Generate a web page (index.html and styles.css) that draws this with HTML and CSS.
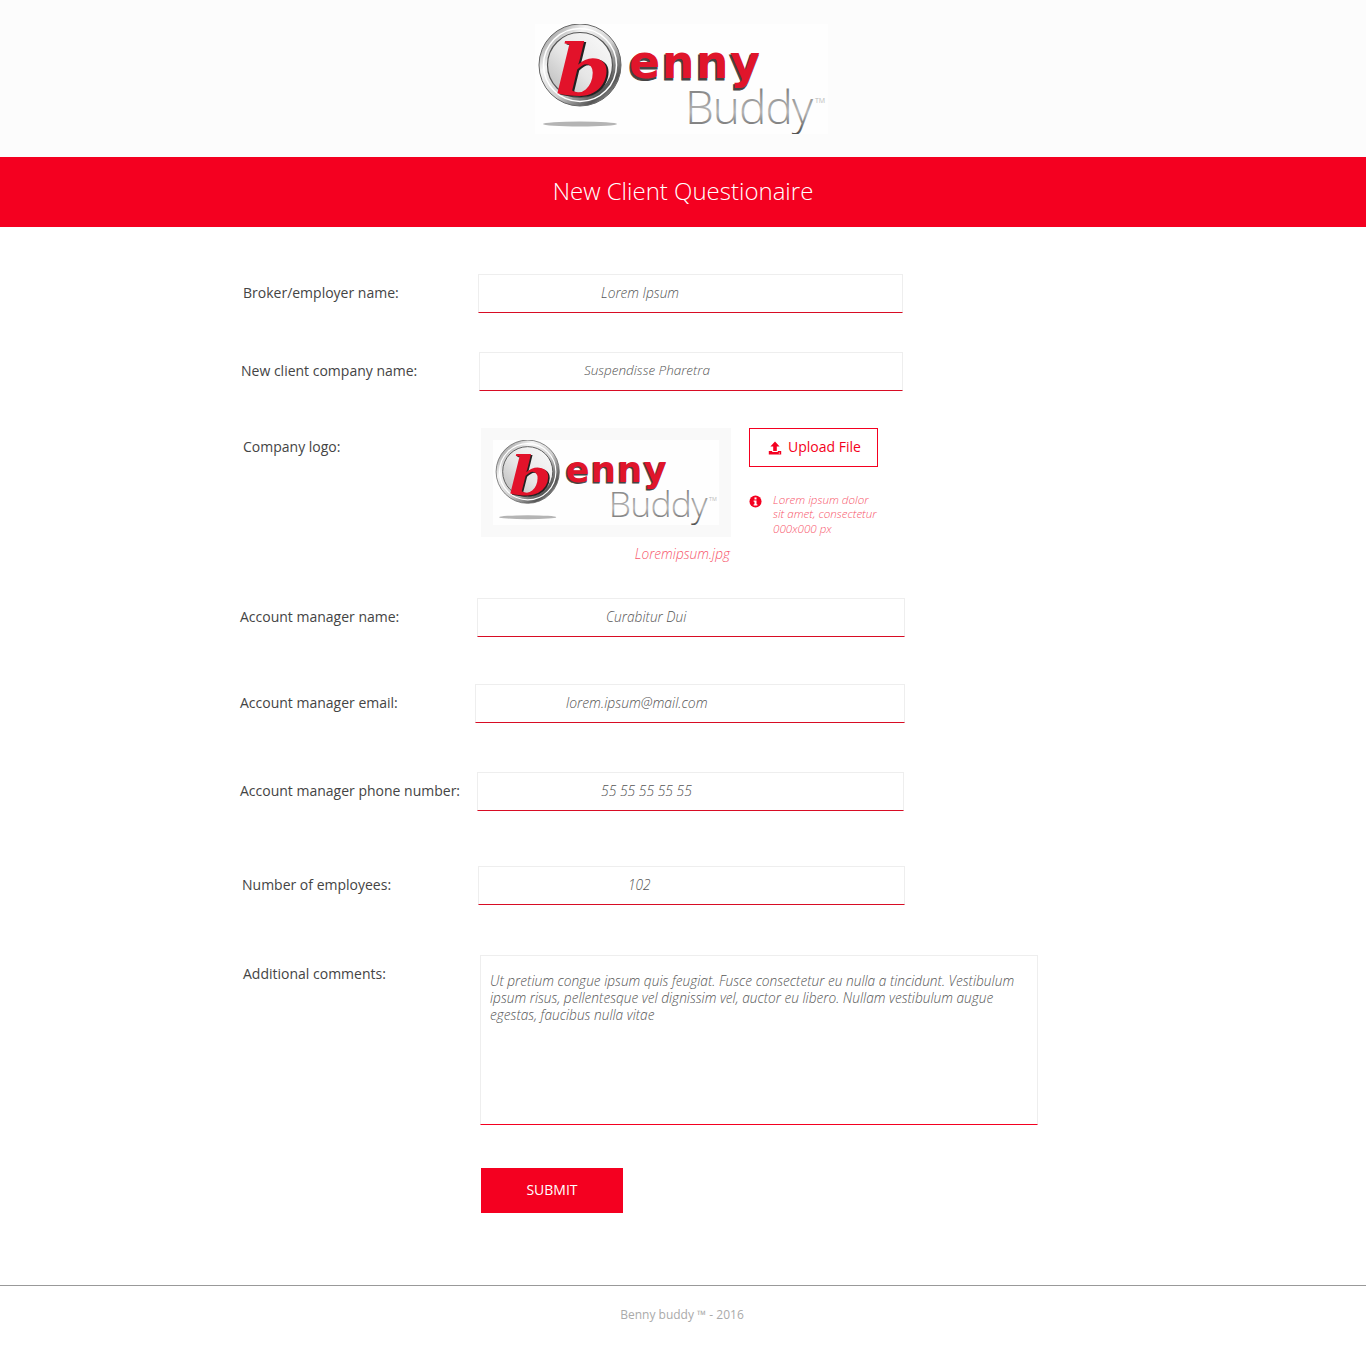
FILE: index.html
```html
<!DOCTYPE html>
<html lang="en">
<head>
    <meta charset="UTF-8">
    <title>New Client Questionaire</title>
    <link rel="stylesheet" href="styles.css">
</head>
<body>
    <header class="top">
        <svg class="logo" viewBox="0 0 293 110">
            <defs>
                <linearGradient id="ring" x1="0" y1="0" x2="1" y2="1">
                    <stop offset="0" stop-color="#6e6e6e"/>
                    <stop offset="0.3" stop-color="#f4f4f4"/>
                    <stop offset="0.55" stop-color="#cfcfcf"/>
                    <stop offset="0.8" stop-color="#555"/>
                    <stop offset="1" stop-color="#e6e6e6"/>
                </linearGradient>
                <linearGradient id="disc" x1="1" y1="0" x2="0" y2="1">
                    <stop offset="0" stop-color="#fbfbfb"/>
                    <stop offset="0.55" stop-color="#e6e6e6"/>
                    <stop offset="1" stop-color="#b5b5b5"/>
                </linearGradient>
                <linearGradient id="buddy" x1="0" y1="0" x2="0" y2="1">
                    <stop offset="0" stop-color="#666"/>
                    <stop offset="0.6" stop-color="#b5b5b5"/>
                    <stop offset="1" stop-color="#444"/>
                </linearGradient>
                <symbol id="logoMark" viewBox="0 0 293 110">
                    <rect class="logo-bg" x="0" y="0" width="293" height="110"/>
                    <ellipse cx="45" cy="100" rx="37" ry="2.5" fill="#b4b4b4"/>
                    <circle cx="45" cy="41" r="41" fill="url(#ring)" stroke="#666" stroke-width="1"/>
                    <circle cx="45" cy="41" r="36.5" fill="none" stroke="#fff" stroke-width="1.5"/>
                    <circle cx="45" cy="41" r="32.5" fill="url(#disc)" stroke="#555" stroke-width="1.2"/>
                    <text class="logo-b logo-b-shadow" transform="translate(23 72) scale(1.25 0.9)">b</text>
                    <text class="logo-b" transform="translate(21 71) scale(1.25 0.9)">b</text>
                    <text class="logo-enny logo-enny-shadow" x="93" y="56" textLength="131">enny</text>
                    <text class="logo-enny" x="94" y="54" textLength="131">enny</text>
                    <text class="logo-buddy" x="150" y="100" textLength="128">Buddy</text>
                    <text class="logo-tm" x="280" y="79">TM</text>
                </symbol>
            </defs>
            <use href="#logoMark"/>
        </svg>
    </header>

    <div class="banner">New Client Questionaire</div>

    <form class="form">
        <div class="row row-broker">
            <label>Broker/employer name:</label>
            <input type="text" value="Lorem Ipsum">
        </div>
        <div class="row row-client">
            <label>New client company name:</label>
            <input type="text" value="Suspendisse Pharetra">
        </div>
        <div class="row row-logo">
            <label>Company logo:</label>
            <div class="logo-col">
                <div class="logo-box">
                    <svg class="logo-small" viewBox="0 0 293 110"><use href="#logoMark"/></svg>
                </div>
                <div class="file-name">Loremipsum.jpg</div>
            </div>
            <div class="upload-col">
                <button type="button" class="upload">
                    <svg viewBox="0 0 14 14" width="14" height="14"><path d="M7 0.5 L11.6 5.5 H8.8 V10 H5.2 V5.5 H2.4 Z M0.8 10 H4.2 V11 H9.8 V10 H13.2 V13.5 H0.8 Z" fill="#f40020"/><rect x="10.8" y="11.6" width="1" height="1" fill="#fff"/></svg>
                    <span class="upload-text">Upload File</span>
                </button>
                <div class="note">
                    <svg viewBox="0 0 14 14" width="13" height="13"><circle cx="7" cy="7" r="6.5" fill="#f40020"/><rect x="5.9" y="2.6" width="2.2" height="2.2" fill="#fff"/><path d="M5 6 H8.1 V10 H9 V11.4 H5 V10 H5.9 V7.3 H5 Z" fill="#fff"/></svg>
                    <p>Lorem ipsum dolor<br>sit amet, consectetur<br>000x000 px</p>
                </div>
            </div>
        </div>
        <div class="row row-manager">
            <label>Account manager name:</label>
            <input type="text" value="Curabitur Dui">
        </div>
        <div class="row row-email">
            <label>Account manager email:</label>
            <input type="text" value="lorem.ipsum@mail.com">
        </div>
        <div class="row row-phone">
            <label>Account manager phone number:</label>
            <input type="text" value="55 55 55 55 55">
        </div>
        <div class="row row-employees">
            <label>Number of employees:</label>
            <input type="text" value="102">
        </div>
        <div class="row row-comments">
            <label>Additional comments:</label>
            <textarea>Ut pretium congue ipsum quis feugiat. Fusce consectetur eu nulla a tincidunt. Vestibulum ipsum risus, pellentesque vel dignissim vel, auctor eu libero. Nullam vestibulum augue egestas, faucibus nulla vitae</textarea>
        </div>
        <button type="button" class="submit">SUBMIT</button>
    </form>

    <footer class="foot">Benny buddy ™ - 2016</footer>
</body>
</html>
```

FILE: styles.css
```css
* {
    box-sizing: border-box;
}
body {
    font-family: 'Open Sans', 'Liberation Sans', sans-serif;
    background-color: #fff;
    color: #444;
    margin: 0;
    padding: 0;
    font-size: 14px;
}
.top {
    height: 157px;
    background-color: #fcfcfc;
    padding: 24px 0 0 535px;
}
.logo {
    display: block;
    width: 293px;
    height: 110px;
}
.logo-bg {
    fill: #fefefe;
}
.logo-b {
    font-family: 'Liberation Serif', serif;
    font-weight: bold;
    font-style: italic;
    font-size: 86px;
    fill: #e2122a;
}
.logo-b-shadow {
    fill: #222;
}
.logo-enny {
    font-family: 'DejaVu Sans', sans-serif;
    font-weight: bold;
    font-size: 46px;
    fill: #e0152b;
}
.logo-enny-shadow {
    fill: #444;
    stroke: #444;
    stroke-width: 1px;
}
.logo-buddy {
    font-family: 'Open Sans', sans-serif;
    font-weight: 300;
    font-size: 46px;
    fill: url(#buddy);
}
.logo-tm {
    font-family: 'Open Sans', sans-serif;
    font-size: 7px;
    fill: #bbb;
}
.banner {
    height: 70px;
    background-color: #f40020;
    color: #fff;
    font-size: 24px;
    font-weight: 300;
    line-height: 68px;
    text-align: center;
}
.form {
    padding: 47px 0 0 240px;
    height: 1058px;
}
.row {
    display: flex;
    align-items: flex-start;
}
.row label {
    width: 235px;
    line-height: 38px;
}
.row input {
    height: 39px;
    padding-bottom: 4px;
    font-family: inherit;
    font-size: 13.7px;
    font-weight: 300;
    font-style: italic;
    color: #555;
    border: 1px solid #eee;
    border-bottom: 1px solid #d80c24;
    border-radius: 0;
    outline: none;
    background: #fff;
}
.row-broker {
    margin-bottom: 39px;
}
.row-broker label {
    padding-left: 3px;
    width: 238px;
}
.row-broker input {
    width: 425px;
    padding-left: 122px;
}
.row-client {
    margin-bottom: 37px;
}
.row-client label {
    padding-left: 1px;
    width: 239px;
}
.row-client input {
    width: 424px;
    padding-left: 104px;
    font-size: 13.5px;
}
.row-logo {
    margin-bottom: 0;
    height: 170px;
}
.row-logo label {
    padding-left: 3px;
    width: 241px;
}
.logo-box {
    width: 250px;
    height: 109px;
    background-color: #f9f9f9;
    padding: 12px 0 0 12px;
}
.logo-small {
    display: block;
    width: 226px;
    height: 85px;
}
.file-name {
    text-align: right;
    color: #f7566b;
    font-size: 13.7px;
    font-weight: 300;
    font-style: italic;
    line-height: 19px;
    margin-top: 7px;
    padding-right: 1px;
}
.upload-col {
    margin-left: 18px;
}
.upload {
    display: flex;
    align-items: center;
    gap: 6px;
    width: 129px;
    height: 39px;
    padding: 0 0 0 18px;
    font-family: inherit;
    font-size: 14px;
    color: #f40020;
    background: #fff;
    border: 1px solid #f40020;
}
.upload-text {
    margin-top: -2px;
}
.note {
    display: flex;
    gap: 11px;
    margin-top: 26px;
}
.note svg {
    margin-top: 2px;
}
.note p {
    margin: 0;
    font-size: 11.6px;
    font-weight: 300;
    font-style: italic;
    line-height: 14.4px;
    color: #f7566b;
}
.row-manager {
    margin-bottom: 47px;
}
.row-manager label {
    width: 237px;
}
.row-manager input {
    width: 428px;
    padding-left: 128px;
}
.row-email {
    margin-bottom: 49px;
}
.row-email input {
    width: 430px;
    padding-left: 90px;
    font-size: 13.9px;
}
.row-phone {
    margin-bottom: 55px;
}
.row-phone label {
    width: 237px;
}
.row-phone input {
    width: 427px;
    padding-left: 123px;
    font-size: 13.9px;
}
.row-employees {
    margin-bottom: 50px;
}
.row-employees label {
    padding-left: 2px;
    width: 238px;
}
.row-employees input {
    width: 427px;
    padding-left: 149px;
}
.row-comments {
    margin-bottom: 43px;
}
.row-comments label {
    padding-left: 3px;
    width: 240px;
}
.row-comments textarea {
    width: 558px;
    height: 170px;
    padding: 16px 9px 0;
    font-family: inherit;
    font-size: 13.7px;
    font-weight: 300;
    font-style: italic;
    line-height: 17px;
    color: #555;
    border: 1px solid #eee;
    border-bottom: 1px solid #f40020;
    border-radius: 0;
    outline: none;
    resize: none;
}
.submit {
    display: block;
    width: 142px;
    height: 45px;
    padding-bottom: 4px;
    margin-left: 241px;
    font-family: inherit;
    font-size: 14px;
    color: #fff;
    background-color: #f40020;
    border: none;
}
.foot {
    height: 72px;
    border-top: 1px solid #999;
    padding: 20px 2px 0 0;
    text-align: center;
    font-size: 12px;
    line-height: 18px;
    color: #aaa;
}
```
